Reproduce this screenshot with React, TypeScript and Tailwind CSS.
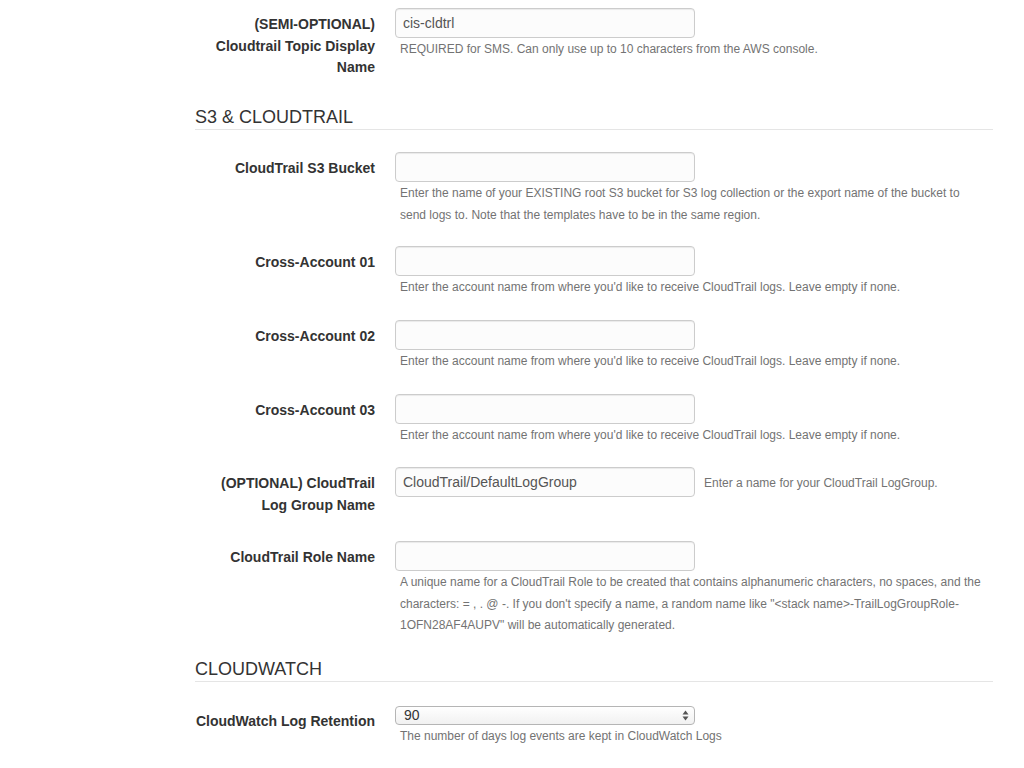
import React from 'react';

type FieldProps = {
  label: React.ReactNode;
  value?: string;
  help?: React.ReactNode;
  inlineHelp?: string;
  className?: string;
};

const Field: React.FC<FieldProps> = ({ label, value, help, inlineHelp, className }) => {
  return (
    <div className={`flex ${className ?? ''}`}>
      <label className="w-[180px] shrink-0 pt-[6px] text-right text-[14px] font-bold leading-[21.5px] text-[#333]">
        {label}
      </label>
      <div className="ml-[20px] flex-1">
        <div className="flex items-start">
          <input
            readOnly
            value={value ?? ''}
            className="h-[30px] w-[300px] rounded-[4px] border border-[#ccc] bg-[#fcfcfc] px-[7px] text-[14px] text-[#555] shadow-[inset_0_1px_1px_rgba(0,0,0,0.075)] outline-none"
          />
          {inlineHelp && (
            <span className="ml-[9px] pt-[6px] text-[12px] leading-[21.5px] text-[#737373]">{inlineHelp}</span>
          )}
        </div>
        {help && (
          <p className="w-[590px] pl-[5px] pt-[1px] text-[12px] leading-[21.5px] text-[#737373]">{help}</p>
        )}
      </div>
    </div>
  );
};

const SectionHeader: React.FC<{ title: string; className?: string }> = ({ title, className }) => (
  <div className={`border-b border-[#e5e5e5] pb-[2px] ${className ?? ''}`}>
    <h3 className="pt-[1px] text-[18px] leading-[20px] text-[#333]">{title}</h3>
  </div>
);

const crossHelp = "Enter the account name from where you'd like to receive CloudTrail logs. Leave empty if none.";

export default function App() {
  return (
    <div className="h-[768px] w-full overflow-hidden bg-white" style={{ fontFamily: '"Liberation Sans", Arial, sans-serif' }}>
      <div className="ml-[195px] flex w-[798px] flex-col pt-[8px]">
        <Field
          label={
            <>
              (SEMI-OPTIONAL)
              <br />
              Cloudtrail Topic Display
              <br />
              Name
            </>
          }
          value="cis-cldtrl"
          help="REQUIRED for SMS. Can only use up to 10 characters from the AWS console."
        />

        <SectionHeader title="S3 & CLOUDTRAIL" className="mt-[27.5px]" />

        <Field
          className="mt-[22px]"
          label="CloudTrail S3 Bucket"
          help="Enter the name of your EXISTING root S3 bucket for S3 log collection or the export name of the bucket to send logs to. Note that the templates have to be in the same region."
        />
        <Field className="mt-[20px]" label="Cross-Account 01" help={crossHelp} />
        <Field className="mt-[21.5px]" label="Cross-Account 02" help={crossHelp} />
        <Field className="mt-[21.5px]" label="Cross-Account 03" help={crossHelp} />
        <Field
          className="mt-[20.5px]"
          label={
            <>
              (OPTIONAL) CloudTrail
              <br />
              Log Group Name
            </>
          }
          value="CloudTrail/DefaultLogGroup"
          inlineHelp="Enter a name for your CloudTrail LogGroup."
        />
        <Field
          className="mt-[25px]"
          label="CloudTrail Role Name"
          help={
            <>
              A unique name for a CloudTrail Role to be created that contains alphanumeric characters, no spaces, and the
              characters: = , . @ -. If you don't specify a name, a random name like "&lt;stack name&gt;-TrailLogGroupRole-
              1OFN28AF4AUPV" will be automatically generated.
            </>
          }
        />

        <SectionHeader title="CLOUDWATCH" className="mt-[21.5px]" />

        <div className="mt-[24px] flex">
          <label className="w-[180px] shrink-0 whitespace-nowrap pt-[5px] text-right text-[14px] font-bold leading-[21.5px] text-[#333]">
            CloudWatch Log Retention
          </label>
          <div className="ml-[20px]">
            <div className="flex h-[19px] w-[300px] items-center justify-between rounded-[4px] border border-[#b5b5b5] bg-gradient-to-b from-white to-[#f1f1f1] pl-[8px] pr-[5px] text-[14px] text-[#333]">
              <span>90</span>
              <svg width="7" height="11" viewBox="0 0 7 11">
                <path d="M3.5 0.5 L6.5 4.5 L0.5 4.5 Z" fill="#555" />
                <path d="M3.5 10.5 L6.5 6.5 L0.5 6.5 Z" fill="#555" />
              </svg>
            </div>
            <p className="pl-[5px] pt-[1px] text-[12px] leading-[21.5px] text-[#737373]">
              The number of days log events are kept in CloudWatch Logs
            </p>
          </div>
        </div>
      </div>
    </div>
  );
}
